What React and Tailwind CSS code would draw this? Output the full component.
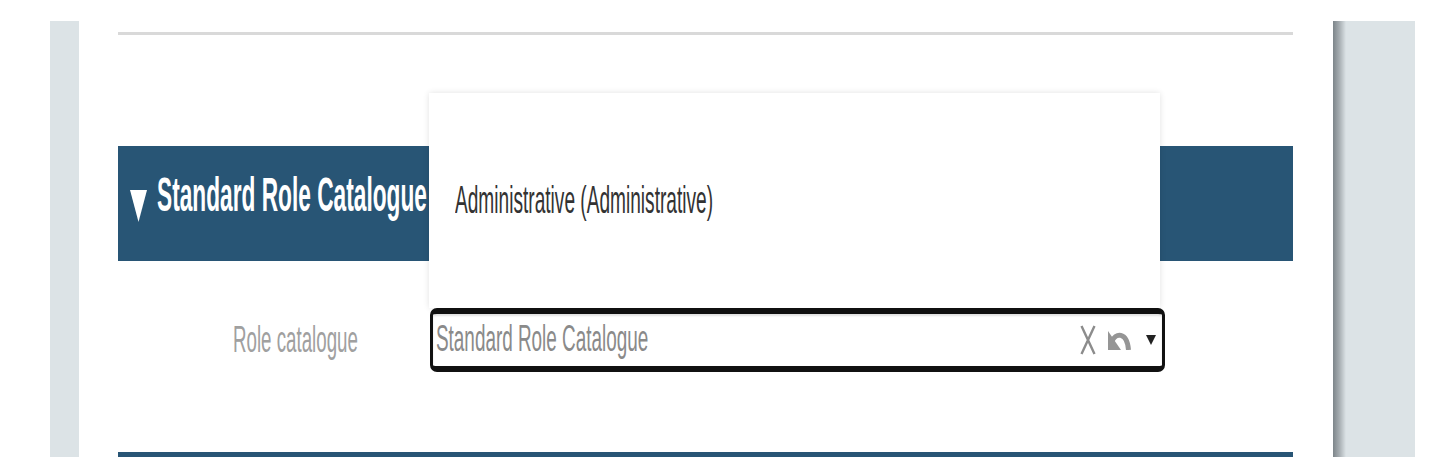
import React from "react";

// Text in this capture is squeezed to about half its width, so each label is a
// normal Liberation Sans run scaled on x from its left edge.
function Squeezed({ className = "", children }) {
  return (
    <span className={`inline-block origin-left whitespace-nowrap ${className}`}>
      {children}
    </span>
  );
}

function CaretDown({ className = "" }) {
  return (
    <svg className={className} viewBox="0 0 17 32" fill="currentColor" aria-hidden="true">
      <path d="M0 0h17L8.5 32z" />
    </svg>
  );
}

function ClearIcon({ className = "" }) {
  return (
    <svg className={className} viewBox="0 0 16 30" fill="none" stroke="currentColor" strokeWidth="2.4" aria-hidden="true">
      <path d="M1.5 1l13 28M14.5 1L1.5 29" />
    </svg>
  );
}

function UndoIcon({ className = "" }) {
  return (
    <svg className={className} viewBox="0 0 23 20" aria-hidden="true">
      <path d="M0 1v19h13z" fill="currentColor" />
      <path d="M4 11.5C7 3 19 1 20.5 20" fill="none" stroke="currentColor" strokeWidth="5" />
    </svg>
  );
}

export default function App() {
  return (
    <div
      className="relative w-[1452px] h-[461px] overflow-hidden bg-white"
      style={{ fontFamily: '"Liberation Sans", Arial, sans-serif' }}
    >
      <div className="flex h-[457px] pt-[21px]">
        <div className="w-[50px]" />
        {/* ── left rail ───────────────────────── */}
        <div className="w-[29px] bg-[#dce3e6]" />

        {/* ── content column ──────────────────── */}
        <div className="w-[1254px] pl-[39px] pr-[40px] flex flex-col">
          <div className="mt-[11px] h-[3px] bg-[#d9d9d9]" />

          {/* Section header */}
          <div className="mt-[111px] h-[115px] bg-[#285575] flex items-start pt-[25px] pl-[12px] text-white">
            <CaretDown className="w-[17px] h-[32px] mt-[19px] shrink-0" />
            <div className="ml-[10px] w-[260px]">
              <Squeezed className="scale-x-[0.473] text-[48px] leading-[48px] font-bold">
                Standard Role Catalogue
              </Squeezed>
            </div>
          </div>

          {/* Role catalogue row */}
          <div className="mt-[47px] flex items-center h-[64px]">
            <div className="w-[312px] pl-[115px] text-[#a0a0a0]">
              <Squeezed className="scale-x-[0.506] text-[37px] leading-[37px]">
                Role catalogue
              </Squeezed>
            </div>
            <div className="w-[735px] h-[64px] rounded-[7px] border-x-[3px] border-y-[6px] border-[#111] flex items-center pl-[3px] pr-[6px] shadow-[inset_0_2px_2px_rgba(0,0,0,0.12)]">
              <div className="flex-1 text-[#8a8a8a] -mt-[2px]">
                <Squeezed className="scale-x-[0.525] text-[36px] leading-[36px]">
                  Standard Role Catalogue
                </Squeezed>
              </div>
              <ClearIcon className="w-[16px] h-[30px] text-[#8c8c8c]" />
              <UndoIcon className="ml-[12px] w-[23px] h-[20px] text-[#959595]" />
              <svg className="ml-[15px] w-[10px] h-[10px] text-[#222]" viewBox="0 0 10 10" fill="currentColor" aria-hidden="true">
                <path d="M0 0h10L5 10z" />
              </svg>
            </div>
          </div>

          <div className="mt-auto h-[5px] bg-[#285575]" />
        </div>

        {/* ── right rail ──────────────────────── */}
        <div className="w-[82px] bg-[linear-gradient(to_right,#7d858a_0px,#a4abaf_6px,#dce3e6_13px)]" />
      </div>

      {/* Open dropdown list */}
      <div className="absolute left-[429px] top-[93px] w-[731px] h-[215px] bg-white shadow-[0_0_6px_rgba(0,0,0,0.12)] flex items-center pl-[26px] text-[#333]">
        <Squeezed className="scale-x-[0.49] text-[39px] leading-[39px] -mt-[2px]">
          Administrative (Administrative)
        </Squeezed>
      </div>
    </div>
  );
}
